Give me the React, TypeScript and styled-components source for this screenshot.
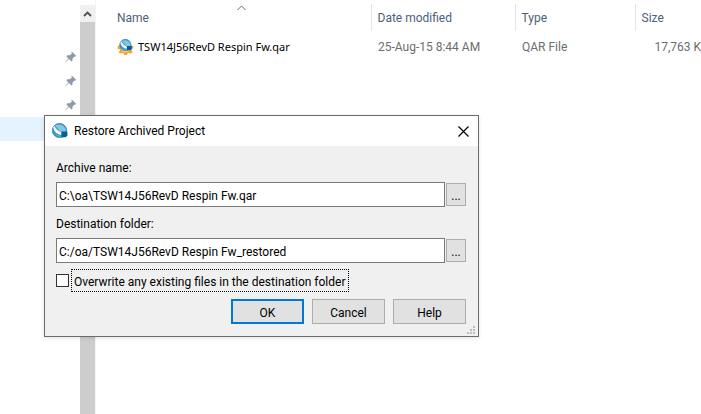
import React, { useState } from "react";
import styled, { createGlobalStyle, css } from "styled-components";

const GlobalStyle = createGlobalStyle`
  *, *::before, *::after { box-sizing: border-box; }
  html, body, #root { height: 100%; }
  body {
    margin: 0;
    overflow: hidden;
    background: #ffffff;
    color: #000000;
    font-family: Roboto, "Noto Sans", sans-serif;
    font-size: 12px;
    line-height: 16px;
  }
  button, input { font: inherit; color: inherit; }
`;

const Desktop = styled.div`
  position: relative;
  min-height: 100%;
  display: flex;
`;

const Sidebar = styled.nav`
  flex: 0 0 80px;
  padding-top: 45px;
`;

const PinRow = styled.div<{ $selected?: boolean }>`
  height: 24px;
  display: flex;
  align-items: center;
  justify-content: flex-end;
  padding-right: 3px;
  background: ${(p) => (p.$selected ? "#e5f3ff" : "transparent")};
`;

const Scrollbar = styled.div`
  flex: 0 0 16px;
  padding-top: 5px;
  display: flex;
  flex-direction: column;
  border-right: 1px solid #f3f3f3;
`;

const ScrollButton = styled.button`
  height: 17px;
  padding: 0;
  border: 0;
  display: grid;
  place-items: center;
  background: #f0f0f0;
`;

const Thumb = styled.div`
  flex: 1;
  background: #cdcdcd;
`;

const FileTable = styled.table`
  flex: 1;
  min-width: 0;
  align-self: flex-start;
  table-layout: fixed;
  border-collapse: collapse;
  margin-top: 4px;
`;

const Col = styled.col<{ $width?: number }>`
  ${(p) => p.$width && css`width: ${p.$width}px;`}
`;

const HeadCell = styled.th<{ $first?: boolean }>`
  position: relative;
  height: 27px;
  padding: 1px 0 0 ${(p) => (p.$first ? 21 : 6)}px;
  text-align: left;
  font-weight: 400;
  color: #4c607a;
  border-left: ${(p) => (p.$first ? "0" : "1px solid #e2e5e5")};
`;

const SortMark = styled.svg`
  position: absolute;
  top: 1px;
  left: calc(50% + 4px);
`;

const Cell = styled.td<{ $first?: boolean; $right?: boolean }>`
  height: 32px;
  padding: 0 0 0 ${(p) => (p.$first ? 21 : 7)}px;
  text-align: ${(p) => (p.$right ? "right" : "left")};
  color: ${(p) => (p.$first ? "#000000" : "#6d6d6d")};
  white-space: nowrap;
`;

const FileName = styled.span`
  display: flex;
  align-items: center;
  gap: 4px;
  font-family: "Noto Sans", sans-serif;
  font-size: 11px;
`;

const Dialog = styled.section`
  position: absolute;
  top: 115px;
  left: 44px;
  width: 435px;
  background: #f0f0f0;
  border: 1px solid #6b6b6b;
  box-shadow: 0 1px 4px rgba(0, 0, 0, 0.12);
`;

const TitleBar = styled.header`
  height: 30px;
  padding: 0 7px;
  display: flex;
  align-items: center;
  gap: 6px;
  background: #ffffff;
`;

const Title = styled.h1`
  flex: 1;
  margin: 0;
  font-size: 12px;
  font-weight: 400;
`;

const CloseButton = styled.button`
  width: 16px;
  height: 16px;
  padding: 0;
  border: 0;
  display: grid;
  place-items: center;
  background: transparent;
`;

const Form = styled.form`
  padding: 14px 12px 12px 11px;
`;

const Field = styled.div`
  display: flex;
  flex-direction: column;
  gap: 6px;
  margin-bottom: 9px;
`;

const FieldRow = styled.div`
  display: flex;
  align-items: center;
  gap: 1px;
`;

const TextBox = styled.input`
  flex: 1;
  min-width: 0;
  height: 25px;
  padding: 2px 2px 0;
  border: 1px solid #7a7a7a;
  background: #ffffff;
  outline: none;
`;

const PushButton = styled.button<{ $kind?: "browse" | "default" }>`
  width: ${(p) => (p.$kind === "browse" ? 20 : 73)}px;
  height: ${(p) => (p.$kind === "browse" ? 23 : 25)}px;
  padding: 2px 0 0;
  border: ${(p) => (p.$kind === "default" ? "2px solid #0078d7" : "1px solid #adadad")};
  background: #e1e1e1;
`;

const CheckRow = styled.div`
  display: flex;
  align-items: center;
  gap: 2px;
  margin-top: -3px;
`;

const CheckBox = styled.input`
  appearance: none;
  width: 13px;
  height: 13px;
  margin: 0;
  border: 1px solid #333333;
  background: #ffffff;
  &:checked { background: #0078d7; box-shadow: inset 0 0 0 2px #ffffff; }
`;

const CheckLabel = styled.label`
  height: 23px;
  padding: 4px 3px 0 2px;
  border: 1px dotted #000000;
  white-space: nowrap;
`;

const Actions = styled.div`
  display: flex;
  justify-content: flex-end;
  gap: 8px;
  margin-top: 7px;
`;

const Grip = styled.svg`
  position: absolute;
  right: 3px;
  bottom: 2px;
`;

const Pin = () => (
  <svg width="12" height="12" viewBox="0 0 12 12" aria-hidden="true">
    <path d="M7 0.7 11.3 5l-1 .7-.8-.2L7.6 7.4 7.4 9.8l-1 .8L4 8.1.8 11.2.5 10.9 3.4 7.5 1.3 5.2l1-.9 2.6-.1L6.8 2.4 6.400 1.300Z" fill="#8f9ba8" />
  </svg>
);

const Globe = () => (
  <g>
    <circle cx="7.500" cy="7.500" r="7.100" fill="#3c94ca" stroke="#2c79b0" strokeWidth="0.8" />
    <path d="M3 2.600C6 .6 11.500 1 13.800 6L13.600 9 9 9.500Z" fill="#80c5ea" />
    <path d="M1.100 4.600 2.400 3Q4.500 7.200 9.500 9.600L9.700 12.200Q2.700 11.500 1.100 4.600Z" fill="#eef8fd" />
    <path d="M2.600 10.800Q5 13.700 9.500 13.700V12.900Q5.500 12.700 2.600 10.800Z" fill="#63b7e0" />
    <path d="M9.400 8.600H15.400V12.800L13.600 14.200H9.400Z" fill="#075b99" />
  </g>
);

const AppIcon = () => (
  <svg width="16" height="16" viewBox="0 0 16 16" aria-hidden="true"><Globe /></svg>
);

const ArchiveIcon = () => (
  <svg width="17" height="16" viewBox="0 0 17 16" aria-hidden="true">
    <path d="M2 6.500 .6 7.500v2.300l2 .4.500 1.200-1.500 1.500 1.700 1.700 2-.8 1.200.5.700 1.600h2.800l.7-1.600 1.200-.5 1.900.9 1.700-1.700-1.200-1.900.5-1.300 1.600-.4V7.500L15 6.500Z" fill="#f5a52b" />
    <path d="M3.500 9Q5 13 8.500 13Q12 13 13.500 10Z" fill="#ffe0a0" />
    <g transform="translate(2.400 0) scale(.8)"><Globe /></g>
  </svg>
);

const gripDots = [[6, 0], [3, 3], [6, 3], [0, 6], [3, 6], [6, 6]];

const paths = [
  { id: "archive", label: "Archive name:", value: "C:\\oa\\TSW14J56RevD Respin Fw.qar" },
  { id: "destination", label: "Destination folder:", value: "C:/oa/TSW14J56RevD Respin Fw_restored" },
];

export default function App() {
  const [overwrite, setOverwrite] = useState(false);
  return (
    <>
      <GlobalStyle />
      <Desktop>
        <Sidebar>
          <PinRow><Pin /></PinRow>
          <PinRow><Pin /></PinRow>
          <PinRow><Pin /></PinRow>
          <PinRow $selected />
        </Sidebar>
        <Scrollbar>
          <ScrollButton type="button" aria-label="Scroll up">
            <svg width="9" height="6" viewBox="0 0 9 6"><path d="M1 5 4.500 1.500 8 5" fill="none" stroke="#505050" strokeWidth="1.800" /></svg>
          </ScrollButton>
          <Thumb />
        </Scrollbar>
        <FileTable>
          <colgroup><Col $width={275} /><Col $width={144} /><Col $width={120} /><Col /></colgroup>
          <thead>
            <tr>
              <HeadCell $first>
                Name
                <SortMark width="9" height="6" viewBox="0 0 9 6"><path d="M.5 5 4.500 1 8.500 5" fill="none" stroke="#6b6b6b" /></SortMark>
              </HeadCell>
              <HeadCell>Date modified</HeadCell>
              <HeadCell>Type</HeadCell>
              <HeadCell>Size</HeadCell>
            </tr>
          </thead>
          <tbody>
            <tr>
              <Cell $first><FileName><ArchiveIcon />TSW14J56RevD Respin Fw.qar</FileName></Cell>
              <Cell>25-Aug-15 8:44 AM</Cell>
              <Cell>QAR File</Cell>
              <Cell $right>17,763 K</Cell>
            </tr>
          </tbody>
        </FileTable>

        <Dialog role="dialog" aria-labelledby="dialog-title">
          <TitleBar>
            <AppIcon />
            <Title id="dialog-title">Restore Archived Project</Title>
            <CloseButton type="button" aria-label="Close">
              <svg width="11" height="11" viewBox="0 0 11 11"><path d="M.5.5 10.500 10.500M10.500.5.5 10.500" stroke="#000" strokeWidth="1.200" /></svg>
            </CloseButton>
          </TitleBar>
          <Form onSubmit={(e) => e.preventDefault()}>
            {paths.map((p) => (
              <Field key={p.id}>
                <label htmlFor={p.id}>{p.label}</label>
                <FieldRow>
                  <TextBox id={p.id} defaultValue={p.value} spellCheck={false} />
                  <PushButton type="button" $kind="browse" aria-label={`Browse: ${p.label}`}>...</PushButton>
                </FieldRow>
              </Field>
            ))}
            <CheckRow>
              <CheckBox id="overwrite" type="checkbox" checked={overwrite} onChange={(e) => setOverwrite(e.target.checked)} />
              <CheckLabel htmlFor="overwrite">Overwrite any existing files in the destination folder</CheckLabel>
            </CheckRow>
            <Actions>
              <PushButton type="submit" $kind="default">OK</PushButton>
              <PushButton type="button">Cancel</PushButton>
              <PushButton type="button">Help</PushButton>
            </Actions>
          </Form>
          <Grip width="8" height="8" viewBox="0 0 8 8" aria-hidden="true">
            {gripDots.map(([x, y]) => <rect key={`${x}-${y}`} x={x} y={y} width="2" height="2" fill="#bcbcbc" />)}
          </Grip>
        </Dialog>
      </Desktop>
    </>
  );
}
